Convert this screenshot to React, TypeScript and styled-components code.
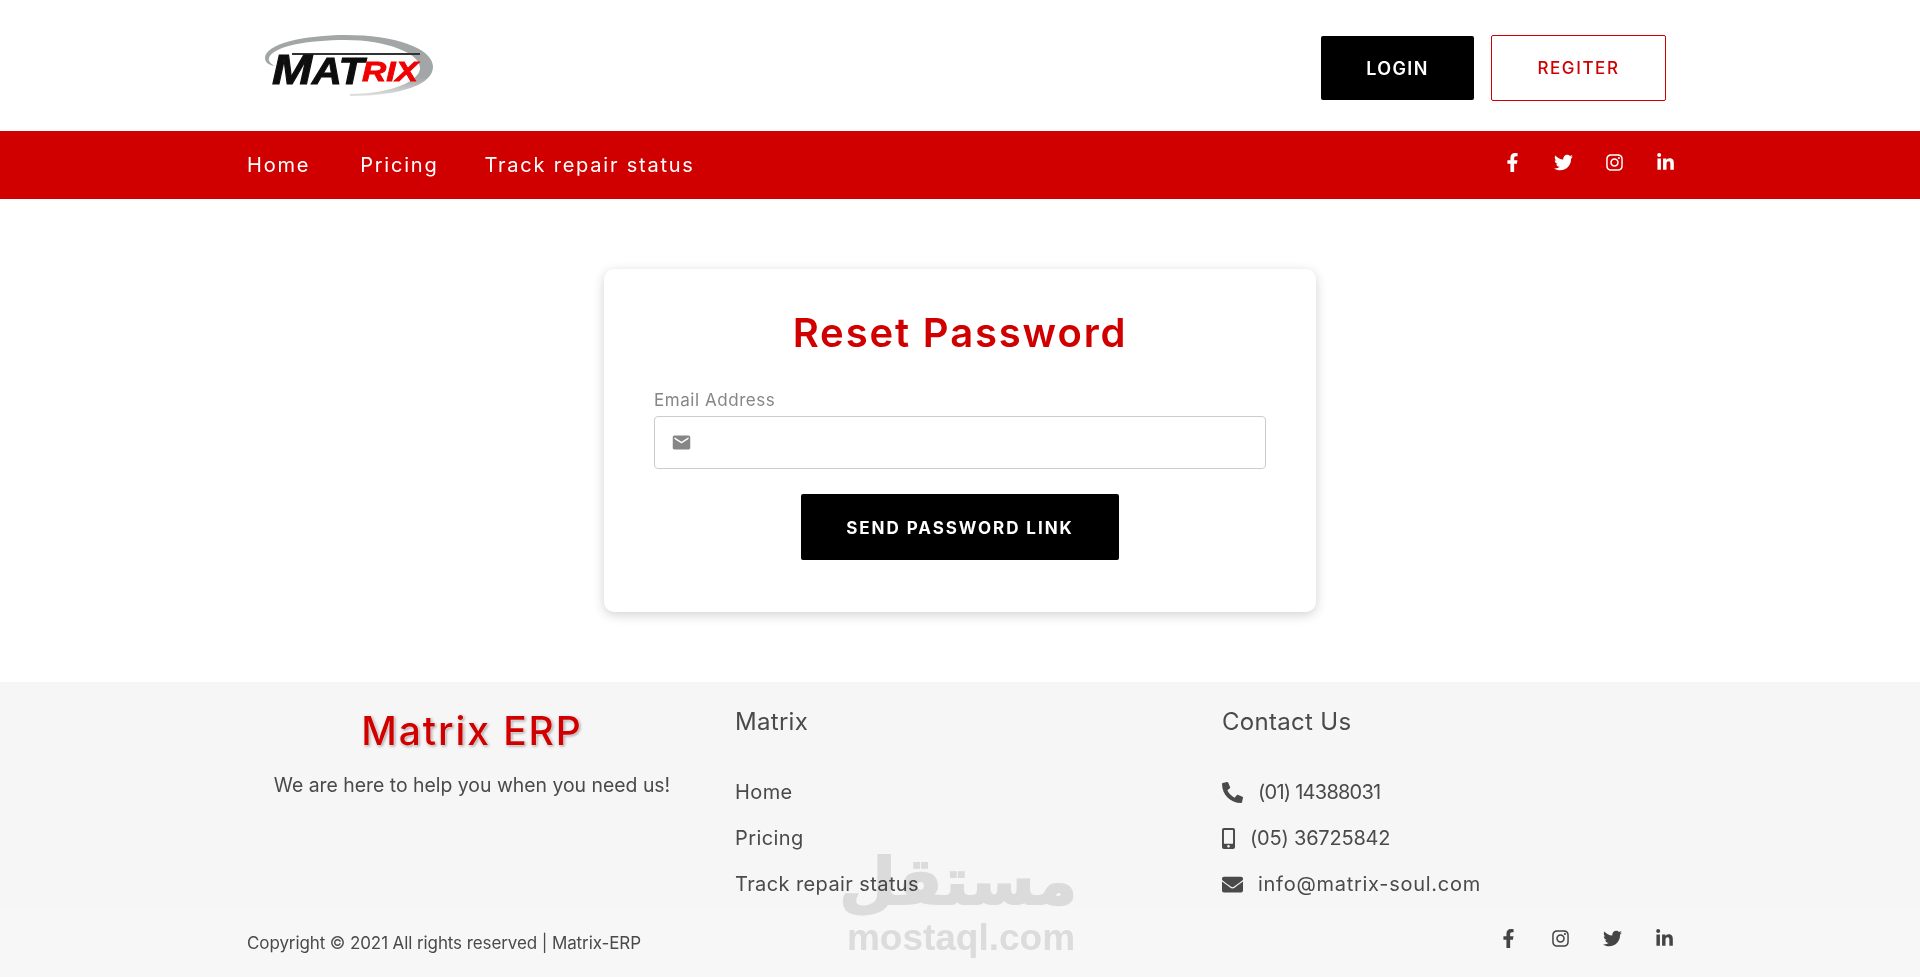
import styled, { createGlobalStyle } from 'styled-components'
import { FaFacebookF, FaInstagram, FaLinkedinIn, FaTwitter, FaPhoneAlt, FaMobileAlt, FaEnvelope } from 'react-icons/fa'
import { MdEmail } from 'react-icons/md'

const RED = '#d00000'
const INK = '#4a4a4a'

const GlobalStyle = createGlobalStyle`
  * {
    box-sizing: border-box;
  }

  body {
    margin: 0;
    background: #fff;
    font-family: Inter, "Open Sans", sans-serif;
  }
`

const Container = styled.div`
  width: 1428px;
  margin: 0 auto;
`

const Header = styled.header`
  height: 131px;
  background: #fff;
`

const HeaderInner = styled(Container)`
  height: 100%;
  display: flex;
  align-items: center;
  justify-content: space-between;
  padding: 0 8px 0 16px;
`

const LogoBox = styled.div`
  width: 174px;
  height: 66px;
  margin-top: 2px;
`

const HeaderActions = styled.div`
  display: flex;
  align-items: center;
  gap: 17px;
  margin-top: 5px;
`

const HeaderButton = styled.button<{ $outline?: boolean }>`
  height: ${p => (p.$outline ? '66px' : '64px')};
  width: ${p => (p.$outline ? '175px' : '153px')};
  padding-top: 1px;
  border: ${p => (p.$outline ? `1px solid ${RED}` : 'none')};
  border-radius: 2px;
  background: ${p => (p.$outline ? '#fff' : '#000')};
  color: ${p => (p.$outline ? RED : '#fff')};
  font-family: Inter, sans-serif;
  font-size: ${p => (p.$outline ? '17px' : '18px')};
  font-weight: ${p => (p.$outline ? 500 : 600)};
  letter-spacing: ${p => (p.$outline ? '1.6px' : '1.4px')};
`

const NavBar = styled.nav`
  height: 68px;
  background: ${RED};
`

const NavInner = styled(Container)`
  height: 100%;
  display: flex;
  align-items: center;
  justify-content: space-between;
  padding-left: 1px;
`

const NavLinks = styled.div`
  display: flex;
  gap: 46px;
`

const NavLink = styled.a`
  color: #fff;
  font-size: 20px;
  letter-spacing: 1.78px;

  &:first-child {
    margin-right: 4px;
  }
`

const SocialRow = styled.div<{ $dark?: boolean }>`
  display: flex;
  gap: ${p => (p.$dark ? '32px' : '31px')};
  margin-bottom: ${p => (p.$dark ? '9px' : '6px')};
  margin-right: ${p => (p.$dark ? '0' : '-1px')};
  color: ${p => (p.$dark ? '#444' : '#fff')};
`

const SocialIcon = styled.span`
  width: 20px;
  height: 20px;
  display: flex;
  align-items: center;
  justify-content: center;
  font-size: 19px;
`

const Main = styled.main`
  display: flex;
  justify-content: center;
  padding: 70px 0;
`

const Card = styled.section`
  width: 712px;
  height: 343px;
  padding: 0 50px;
  display: flex;
  flex-direction: column;
  border-radius: 10px;
  background: #fff;
  box-shadow: 0 3px 12px rgba(0, 0, 0, 0.18);
`

const Title = styled.h1`
  margin: 38px 0 0;
  color: ${RED};
  font-size: 40px;
  line-height: 52px;
  font-weight: 600;
  letter-spacing: 1.85px;
  text-align: center;
`

const FieldLabel = styled.label`
  margin-top: 30px;
  color: #868686;
  font-size: 17px;
  line-height: 22px;
  letter-spacing: 0.55px;
`

const Field = styled.div`
  height: 53px;
  margin-top: 5px;
  display: flex;
  align-items: center;
  gap: 10px;
  padding: 0 16px;
  border: 1px solid #ccc;
  border-radius: 4px;
  color: #868686;
  font-size: 21px;
`

const FieldInput = styled.input`
  flex: 1;
  border: none;
  outline: none;
  background: transparent;
  font-size: 16px;
`

const SubmitButton = styled.button`
  width: 318px;
  height: 66px;
  margin: 25px auto 0;
  padding-top: 3px;
  border: none;
  border-radius: 2px;
  background: #000;
  color: #fff;
  font-family: Inter, sans-serif;
  font-size: 17px;
  font-weight: 700;
  letter-spacing: 1.95px;
`

const Footer = styled.footer`
  position: relative;
  height: 295px;
  background: #f6f6f6;
  color: ${INK};
  overflow: hidden;
`

const FooterColumns = styled(Container)`
  height: 225px;
  padding-top: 21px;
  display: grid;
  grid-template-columns: 489px 487px 1fr;
`

const BrandColumn = styled.div`
  padding: 0 37px 0 0;
  text-align: center;
`

const BrandName = styled.div`
  color: ${RED};
  font-size: 39px;
  line-height: 56px;
  font-weight: 500;
  letter-spacing: 1.9px;
  text-shadow: 0 0 2px #fff, 0 0 2px #fff, 1px 1px 3px #777;
`

const BrandText = styled.p`
  margin: 11px 0 0;
  font-size: 19.4px;
  line-height: 30px;
`

const ColumnTitle = styled.h3`
  margin: 0 0 28px;
  font-size: 24px;
  line-height: 38px;
  font-weight: 400;
  letter-spacing: 0.3px;
`

const FooterRow = styled.div<{ $tracking?: number }>`
  height: 46px;
  display: flex;
  align-items: center;
  font-size: 20px;
  letter-spacing: ${p => p.$tracking ?? 0.4}px;
`

const ContactIcon = styled.span<{ $width?: number }>`
  display: flex;
  font-size: 21px;
  margin-right: 15px;

  svg {
    width: ${p => p.$width ?? 21}px;
    height: 21px;
  }
`

const FooterBottom = styled.div`
  height: 70px;
  background: #f7f7f7;
`

const FooterBottomInner = styled(Container)`
  height: 100%;
  display: flex;
  align-items: center;
  justify-content: space-between;
  padding: 2px 0 0 1px;
  font-size: 17px;
  letter-spacing: -0.1px;
`

const Watermark = styled.div`
  position: absolute;
  left: 845px;
  top: 164px;
  width: 232px;
  color: #e3e3e3;
  mix-blend-mode: multiply;
  text-align: center;
  pointer-events: none;
`

const WatermarkArabic = styled.div`
  font-family: "DejaVu Sans", sans-serif;
  font-size: 65px;
  line-height: 72px;
  font-weight: 700;
  -webkit-text-stroke: 2px #e3e3e3;
`

const WatermarkLatin = styled.div`
  font-family: "Liberation Sans", sans-serif;
  font-size: 37px;
  line-height: 40px;
  font-weight: 700;
`

const MatrixLogo = () => (
  <svg width='174' height='66' viewBox='0 0 174 66' style={{ overflow: 'visible' }}>
    <defs>
      <filter id='soft'>
        <feGaussianBlur stdDeviation='0.55' />
      </filter>
      <linearGradient id='ring' x1='0' y1='0' x2='0' y2='1'>
        <stop offset='0' stopColor='#a3a6a6' />
        <stop offset='0.7' stopColor='#a3a6a6' />
        <stop offset='1' stopColor='#dfe0e0' />
      </linearGradient>
    </defs>
    <g filter='url(#soft)'>
      <path
        d='M3 24 C3 10 42 1 84 1 C132 1 170 14 171 32 C172 50 140 62 88 62 L88 60 C126 60 158 48 158 34 C158 19 124 6 84 6 C46 6 11 12 7 24 C6 27 9 30 13 32 C6 31 3 28 3 24 Z'
        fill='url(#ring)'
      />
      <rect x='30' y='19' width='128' height='2' fill='#333' />
      <text x='10' y='50' fontFamily='Liberation Sans' fontWeight='700' fontStyle='italic' fontSize='36' fill='#0c0c0c' stroke='#0c0c0c' strokeWidth='1' textLength='92' lengthAdjust='spacingAndGlyphs'>
        <tspan fontSize='42'>M</tspan>AT
      </text>
      <text x='100' y='47' fontFamily='Liberation Sans' fontWeight='700' fontStyle='italic' fontSize='27' fill='#f00000' stroke='#f00000' strokeWidth='0.8' textLength='56' lengthAdjust='spacingAndGlyphs'>
        RIX
      </text>
    </g>
  </svg>
)

const navItems = ['Home', 'Pricing', 'Track repair status']

export default function App() {
  return (
    <>
      <GlobalStyle />
      <Header>
        <HeaderInner>
          <LogoBox>
            <MatrixLogo />
          </LogoBox>
          <HeaderActions>
            <HeaderButton>LOGIN</HeaderButton>
            <HeaderButton $outline>REGITER</HeaderButton>
          </HeaderActions>
        </HeaderInner>
      </Header>
      <NavBar>
        <NavInner>
          <NavLinks>
            {navItems.map(item => (
              <NavLink key={item}>{item}</NavLink>
            ))}
          </NavLinks>
          <SocialRow>
            <SocialIcon><FaFacebookF /></SocialIcon>
            <SocialIcon><FaTwitter /></SocialIcon>
            <SocialIcon><FaInstagram /></SocialIcon>
            <SocialIcon><FaLinkedinIn /></SocialIcon>
          </SocialRow>
        </NavInner>
      </NavBar>
      <Main>
        <Card>
          <Title>Reset Password</Title>
          <FieldLabel>Email Address</FieldLabel>
          <Field>
            <MdEmail />
            <FieldInput type='email' />
          </Field>
          <SubmitButton>SEND PASSWORD LINK</SubmitButton>
        </Card>
      </Main>
      <Footer>
        <FooterColumns>
          <BrandColumn>
            <BrandName>Matrix ERP</BrandName>
            <BrandText>We are here to help you when you need us!</BrandText>
          </BrandColumn>
          <div>
            <ColumnTitle>Matrix</ColumnTitle>
            {navItems.map(item => (
              <FooterRow key={item}>{item}</FooterRow>
            ))}
          </div>
          <div>
            <ColumnTitle>Contact Us</ColumnTitle>
            <FooterRow $tracking={-0.75}>
              <ContactIcon><FaPhoneAlt /></ContactIcon>
              (01) 14388031
            </FooterRow>
            <FooterRow $tracking={-0.2}>
              <ContactIcon $width={13}><FaMobileAlt /></ContactIcon>
              (05) 36725842
            </FooterRow>
            <FooterRow $tracking={0.73}>
              <ContactIcon><FaEnvelope /></ContactIcon>
              info@matrix-soul.com
            </FooterRow>
          </div>
        </FooterColumns>
        <FooterBottom>
          <FooterBottomInner>
            <span>Copyright © 2021 All rights reserved | Matrix-ERP</span>
            <SocialRow $dark>
              <SocialIcon><FaFacebookF /></SocialIcon>
              <SocialIcon><FaInstagram /></SocialIcon>
              <SocialIcon><FaTwitter /></SocialIcon>
              <SocialIcon><FaLinkedinIn /></SocialIcon>
            </SocialRow>
          </FooterBottomInner>
        </FooterBottom>
        <Watermark>
          <WatermarkArabic lang='ar' dir='rtl'>مستقل</WatermarkArabic>
          <WatermarkLatin>mostaql.com</WatermarkLatin>
        </Watermark>
      </Footer>
    </>
  )
}
